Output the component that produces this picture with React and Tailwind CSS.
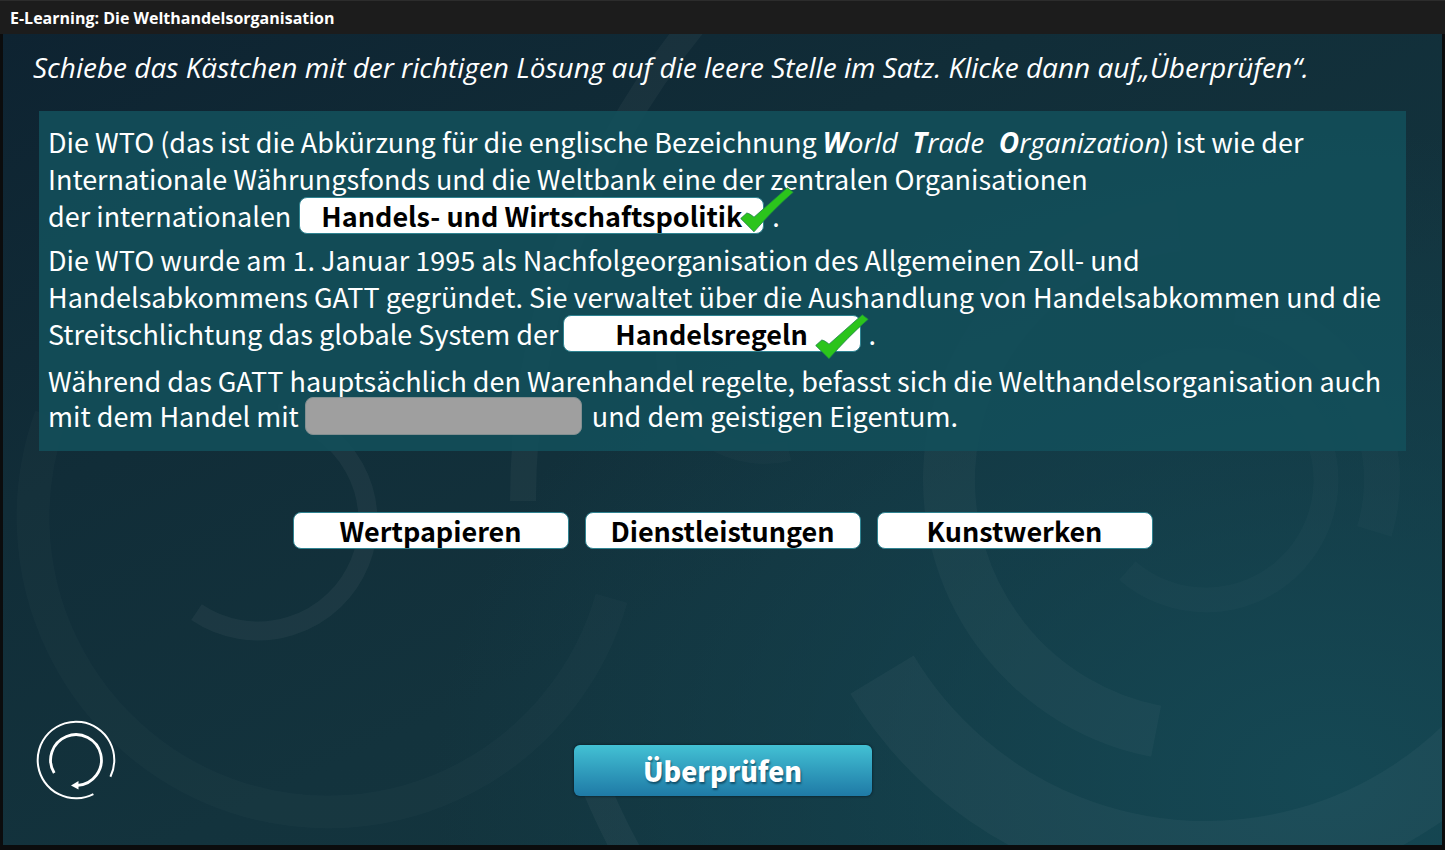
const BODY_FONT = "font-['Noto_Sans_CJK_SC','Open_Sans',sans-serif]";
const ITALIC_FONT = "font-['Open_Sans','Noto_Sans',sans-serif]";

function arc(cx, cy, r, from, to) {
  const point = (deg) => {
    const a = (deg * Math.PI) / 180;
    return `${(cx + r * Math.cos(a)).toFixed(2)} ${(cy + r * Math.sin(a)).toFixed(2)}`;
  };
  return `M${point(from)}A${r} ${r} 0 ${to - from > 180 ? 1 : 0} 1 ${point(to)}`;
}

function Backdrop() {
  return (
    <svg
      className="absolute inset-0 h-full w-full"
      viewBox="3 34 1439 811"
      preserveAspectRatio="xMidYMid slice"
      fill="none"
      stroke="#fff"
      aria-hidden="true"
    >
      <path d={arc(328, 517, 295, 16, 200)} strokeWidth="33" strokeOpacity="0.018" />
      <path d={arc(258, 521, 110, -80, 124)} strokeWidth="19" strokeOpacity="0.042" />
      <path d={arc(1274, 501, 751, 180, 220)} strokeWidth="26" strokeOpacity="0.038" />
      <path d={arc(1274, 501, 736, 140, 159)} strokeWidth="28" strokeOpacity="0.038" />
      <path d={arc(765, 355, 99, 76, 200)} strokeWidth="20" strokeOpacity="0.02" />
      <path d={arc(1205, 480, 256, 101, 264)} strokeWidth="52" strokeOpacity="0.033" />
      <path d={arc(1206, 480, 120, -120, 131)} strokeWidth="25" strokeOpacity="0.02" />
      <path d={arc(1206, 480, 176, -80, 17)} strokeWidth="36" strokeOpacity="0.018" />
      <path d={arc(1206, 480, 378, 0, 149)} strokeWidth="74" strokeOpacity="0.035" />
    </svg>
  );
}

function Check({ className }) {
  return (
    <svg className={`absolute h-[46px] w-[54px] ${className}`} viewBox="0 0 54 46" role="img" aria-label="richtig">
      <path
        d="M.7 31.5 6.8 26C9.500 26.500 11.800 28.300 14 30.200L47.300.7 53.300 5.200C39 17.500 26 31 14 44.800Z"
        fill="#2bc41c"
        stroke="#1c7f4a"
        strokeWidth=".8"
      />
    </svg>
  );
}

function Chip({ className, children }) {
  return (
    <button
      type="button"
      draggable
      className={`relative flex h-[37px] shrink-0 cursor-grab items-center justify-center rounded-lg border border-[#2f8391] bg-white text-[27px] leading-none font-bold text-black ${className}`}
    >
      {children}
    </button>
  );
}

function RestartIcon() {
  return (
    <svg className="size-20" viewBox="0 0 80 80" fill="none" stroke="#fff" aria-hidden="true">
      <path d={arc(40, 40, 38.3, 63, 386)} strokeWidth="2" />
      <path d={arc(40, 40, 25.4, 149, 446)} strokeWidth="2.8" />
      <path d="M35 65.400 42.500 61V69.500Z" fill="#fff" stroke="none" />
    </svg>
  );
}

export default function App() {
  return (
    <div className="flex min-h-screen flex-col bg-[#0b0c0d]">
      <header className="flex h-[34px] items-center border-t border-[#2c2c2c] bg-[#1c1c1c] px-2.5">
        <h1 className="font-['Open_Sans',sans-serif] text-[16px] leading-none font-bold text-white">
          E-Learning: Die Welthandelsorganisation
        </h1>
      </header>

      <main
        className={`relative mr-[3px] mb-[5px] ml-[3px] flex flex-1 flex-col overflow-hidden bg-[radial-gradient(ellipse_62%_80%_at_92%_92%,#154854_0%,#14455280_55%,transparent_100%),linear-gradient(155deg,#0e2331_0%,#112d38_32%,#13333d_60%,#14373f_100%)] text-white ${BODY_FONT}`}
      >
        <Backdrop />

        <div className="relative flex flex-1 flex-col">
          <p className={`pt-3 pl-[30px] text-[28px] leading-[42px] italic ${ITALIC_FONT}`}>
            Schiebe das Kästchen mit der richtigen Lösung auf die leere Stelle im Satz. Klicke dann auf„Überprüfen“.
          </p>

          <section className="mx-9 mt-[23px] bg-[#134f5a]/90 pt-3 pb-[18px] pl-[9px] text-[27px] leading-[37px] whitespace-nowrap">
            <div>
              <p>
                Die WTO (das ist die Abkürzung für die englische Bezeichnung{" "}
                <em className={`text-[28px] leading-none ${ITALIC_FONT}`}>
                  <b>W</b>orld&nbsp; <b>T</b>rade&nbsp; <b>O</b>rganization
                </em>
                ) ist wie der
                <br />
                Internationale Währungsfonds und die Weltbank eine der zentralen Organisationen
              </p>
              <div className="flex h-[37px] items-center">
                <span>der internationalen</span>
                <Chip className="ml-2 w-[465px]">
                  Handels- und Wirtschaftspolitik
                  <Check className="-top-[11px] -right-[31px]" />
                </Chip>
                <span className="ml-2">.</span>
              </div>
            </div>

            <div className="mt-[7px]">
              <p>
                Die WTO wurde am 1. Januar 1995 als Nachfolgeorganisation des Allgemeinen Zoll- und
                <br />
                Handelsabkommens GATT gegründet. Sie verwaltet über die Aushandlung von Handelsabkommen und die
              </p>
              <div className="flex h-[37px] items-center">
                <span>Streitschlichtung das globale System der</span>
                <Chip className="ml-1 w-[298px]">
                  Handelsregeln
                  <Check className="-top-0.5 -right-[9px]" />
                </Chip>
                <span className="ml-2">.</span>
              </div>
            </div>

            <div className="mt-[11px] leading-[35px]">
              <p>Während das GATT hauptsächlich den Warenhandel regelte, befasst sich die Welthandelsorganisation auch</p>
              <div className="flex h-[35px] items-center">
                <span>mit dem Handel mit</span>
                <span className="ml-1.5 h-[38px] w-[277px] shrink-0 rounded-lg border border-[#838f91] bg-[#9f9f9f]" />
                <span className="ml-2.5">und dem geistigen Eigentum.</span>
              </div>
            </div>
          </section>

          <div className="mt-[61px] flex justify-center gap-4">
            <Chip className="w-[276px]">Wertpapieren</Chip>
            <Chip className="w-[276px]">Dienstleistungen</Chip>
            <Chip className="w-[276px]">Kunstwerken</Chip>
          </div>

          <footer className="mt-auto grid grid-cols-[1fr_auto_1fr] items-end px-[33px] pb-[45px]">
            <button type="button" aria-label="Neu starten" className="size-20">
              <RestartIcon />
            </button>
            <button
              type="button"
              className="mb-1 h-[51px] w-[298px] rounded-md bg-linear-to-b from-[#43c1d4] to-[#1f7aa6] text-[27px] leading-none font-black shadow-[0_0_2px_1px_rgba(8,30,40,0.6)] [text-shadow:1px_2px_2px_rgba(0,40,60,0.6)]"
            >
              Überprüfen
            </button>
          </footer>
        </div>
      </main>
    </div>
  );
}
